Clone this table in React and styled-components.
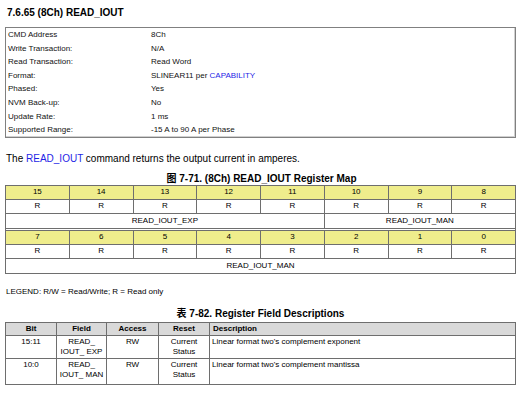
import React from 'react';
import styled, { createGlobalStyle } from 'styled-components';

const GlobalStyle = createGlobalStyle`
  body {
    margin: 0;
    background: #ffffff;
    font-family: 'Liberation Sans', Arial, 'Noto Sans CJK SC', sans-serif;
    color: #000;
  }
`;

const summary = [
  ['CMD Address', '8Ch'],
  ['Write Transaction:', 'N/A'],
  ['Read Transaction:', 'Read Word'],
  ['Format:', 'SLINEAR11 per ', 'CAPABILITY'],
  ['Phased:', 'Yes'],
  ['NVM Back-up:', 'No'],
  ['Update Rate:', '1 ms'],
  ['Supported Range:', '-15 A to 90 A per Phase'],
];

const blocks = [
  { bits: [15, 14, 13, 12, 11, 10, 9, 8], fields: [['READ_IOUT_EXP', 5], ['READ_IOUT_MAN', 3]] },
  { bits: [7, 6, 5, 4, 3, 2, 1, 0], fields: [['READ_IOUT_MAN', 8]] },
];

const fieldRows = [
  ['15:11', ['READ_', 'IOUT_ EXP'], 'RW', ['Current', 'Status'], "Linear format two's complement exponent"],
  ['10:0', ['READ_', 'IOUT_ MAN'], 'RW', ['Current', 'Status'], "Linear format two's complement mantissa"],
];

export default function App() {
  return (
    <Page>
      <GlobalStyle />
      <Title>7.6.65 (8Ch) READ_IOUT</Title>
      <SummaryBox>
        {summary.map(([label, value, link]) => (
          <SummaryRow key={label}>
            <span>{label}</span>
            <span>
              {value}
              {link && <Link>{link}</Link>}
            </span>
          </SummaryRow>
        ))}
      </SummaryBox>
      <Sentence>
        The <Link>READ_IOUT</Link> command returns the output current in amperes.
      </Sentence>
      <Caption>图 7-71. (8Ch) READ_IOUT Register Map</Caption>
      <MapTable>
        <colgroup>
          {Array.from({ length: 8 }).map((_, i) => <col key={i} style={{ width: '12.5%' }} />)}
        </colgroup>
        <tbody>
          {blocks.map((b, bi) => (
            <React.Fragment key={bi}>
              {bi > 0 && (
                <tr>
                  <Spacer colSpan={8} />
                </tr>
              )}
              <tr>
                {b.bits.map((n) => <BitCell key={n}>{n}</BitCell>)}
              </tr>
              <tr>
                {b.bits.map((n) => <MapCell key={n}>R</MapCell>)}
              </tr>
              <tr>
                {b.fields.map(([name, span], i) => (
                  <MapCell key={i} colSpan={span} $tall>{name}</MapCell>
                ))}
              </tr>
            </React.Fragment>
          ))}
        </tbody>
      </MapTable>
      <Legend>LEGEND: R/W = Read/Write; R = Read only</Legend>
      <Caption $second>表 7-82. Register Field Descriptions</Caption>
      <FieldTable>
        <colgroup>
          <col style={{ width: 51 }} />
          <col style={{ width: 50 }} />
          <col style={{ width: 52 }} />
          <col style={{ width: 51 }} />
          <col />
        </colgroup>
        <thead>
          <tr>
            <HeadCell>Bit</HeadCell>
            <HeadCell>Field</HeadCell>
            <HeadCell>Access</HeadCell>
            <HeadCell>Reset</HeadCell>
            <HeadCell $left>Description</HeadCell>
          </tr>
        </thead>
        <tbody>
          {fieldRows.map(([bit, field, access, reset, desc], i) => (
            <FieldRow key={bit} $h={i === 0 ? 23 : 26}>
              <BodyCell>{bit}</BodyCell>
              <BodyCell>{field[0]}<br />{field[1]}</BodyCell>
              <BodyCell>{access}</BodyCell>
              <BodyCell>{reset[0]}<br />{reset[1]}</BodyCell>
              <BodyCell $left>{desc}</BodyCell>
            </FieldRow>
          ))}
        </tbody>
      </FieldTable>
    </Page>
  );
}

const Page = styled.div`
  width: 511px;
  padding: 7px 0 0 5px;
`;

const Title = styled.div`
  font-size: 10px;
  font-weight: bold;
  line-height: 12px;
  padding-left: 2px;
  margin-bottom: 8px;
`;

const SummaryBox = styled.div`
  border: 1px solid #808080;
  box-shadow: inset -1px -1px 0 #d0d0d0;
  padding: 0 0 0 2px;
  color: #111;
`;

const SummaryRow = styled.div`
  display: grid;
  grid-template-columns: 143px 1fr;
  height: 13.6px;
  line-height: 13.6px;
  font-size: 8px;
`;

const Link = styled.span`
  color: #1f1fe6;
`;

const Sentence = styled.div`
  font-size: 10px;
  line-height: 12px;
  margin-top: 15px;
  padding-left: 1px;
`;

const Caption = styled.div`
  font-size: 10px;
  font-weight: bold;
  line-height: 12px;
  text-align: center;
  margin-top: ${(p) => (p.$second ? '11px' : '8px')};
  margin-bottom: ${(p) => (p.$second ? '2px' : '0')};
  padding-left: ${(p) => (p.$second ? '0' : '2px')};
`;

const MapTable = styled.table`
  width: 511px;
  border-collapse: collapse;
  table-layout: fixed;
  font-size: 8px;
  border-left: 1px solid #6e6e6e;
  border-right: 1px solid #6e6e6e;
`;

const MapCell = styled.td`
  border: 1px solid #6e6e6e;
  text-align: center;
  height: ${(p) => (p.$tall ? '14px' : '13px')};
  padding: 0;
  line-height: 10px;
  background: #fff;
`;

const BitCell = styled(MapCell)`
  background: #efed8c;
`;

const Spacer = styled.td`
  height: 1px;
  padding: 0;
  border-left: 1px solid #6e6e6e;
  border-right: 1px solid #6e6e6e;
`;

const Legend = styled.div`
  font-size: 8px;
  line-height: 10px;
  margin-top: 13px;
  padding-left: 1px;
`;

const FieldTable = styled.table`
  width: 511px;
  border-collapse: collapse;
  table-layout: fixed;
  font-size: 8px;
`;

const HeadCell = styled.th`
  background: #d9d9d9;
  border: 1px solid #6e6e6e;
  height: 12px;
  padding: 0 3px;
  line-height: 10px;
  font-weight: bold;
  text-align: ${(p) => (p.$left ? 'left' : 'center')};
`;

const FieldRow = styled.tr`
  height: ${(p) => p.$h}px;
`;

const BodyCell = styled.td`
  border: 1px solid #6e6e6e;
  padding: 1px 2px 0;
  line-height: 10.5px;
  vertical-align: top;
  white-space: nowrap;
  text-align: ${(p) => (p.$left ? 'left' : 'center')};
`;
